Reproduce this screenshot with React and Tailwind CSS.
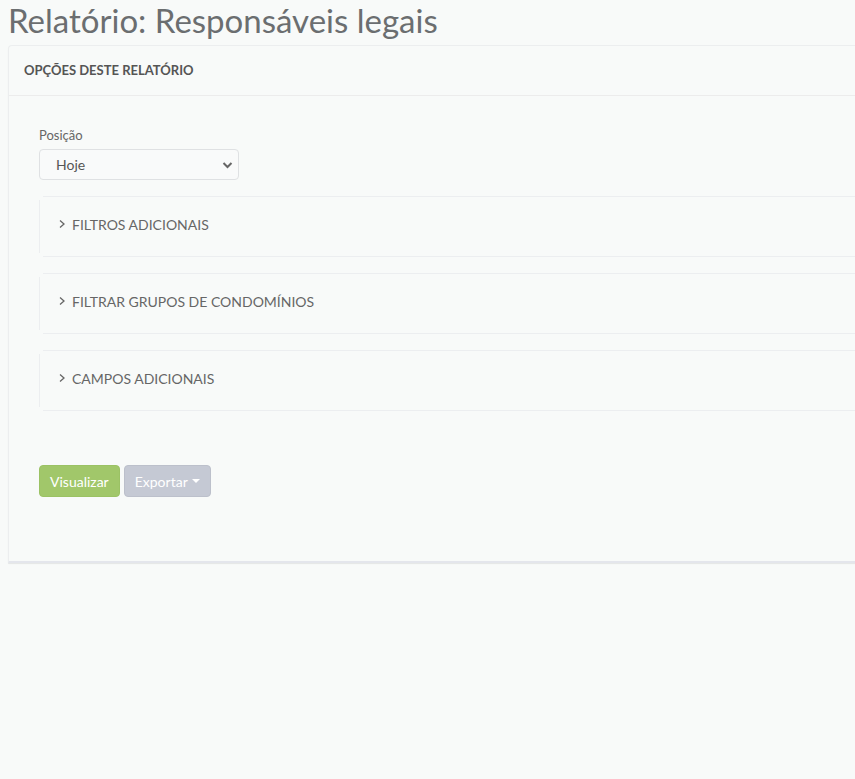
import React from 'react'

const Chevron = () => (
    <svg width="8" height="10" viewBox="0 0 8 10" className="mr-[6px]" fill="none">
        <path d="M2 1.5 L6 5 L2 8.5" stroke="#666" strokeWidth="1.3" />
    </svg>
)

const Collapsible = ({ title }) => (
    <div className="relative h-[61px] flex items-center pl-[19px] pb-[5px] text-[14px] text-[#666] uppercase">
        <div className="absolute left-[4px] right-0 top-0 h-px bg-[#eceef0]" />
        <div className="absolute left-[4px] right-0 bottom-0 h-px bg-[#eceef0]" />
        <div className="absolute left-0 top-[4px] bottom-[4px] w-px bg-[#eceef0]" />
        <Chevron />
        <span>{title}</span>
    </div>
)

export default function App() {
    return (
        <div className="w-[855px] h-[779px] overflow-hidden bg-[#f8faf9]" style={{ fontFamily: 'Lato, "Open Sans", sans-serif' }}>
            <h1 className="pl-[8px] pt-[1px] text-[33px] leading-[38px] text-[#6b6e70]">Relatório: Responsáveis legais</h1>
            <div className="ml-[8px] mt-[6px] w-[900px] bg-[#f8faf9] border-l border-t border-[#eceeef] rounded-tl-[4px] shadow-[0_1px_1px_rgba(0,0,0,0.08)] border-b-2 border-b-[#e4e6ec]">
                <div className="h-[50px] flex items-center px-[15px] border-b border-[#ececec]">
                    <span className="text-[13px] font-bold text-[#555] uppercase">Opções deste relatório</span>
                </div>
                <div className="pl-[30px] pr-0 pt-[30px] pb-[64px]">
                    <div className="text-[13px] text-[#666] leading-[18px]">Posição</div>
                    <div className="mt-[5px] w-[200px] h-[31px] border border-[#dfe1e3] rounded-[4px] flex items-center justify-between pl-[16px] pr-[5px] bg-[#f9fafa]">
                        <span className="text-[14px] text-[#555]">Hoje</span>
                        <svg width="11" height="8" viewBox="0 0 11 8" fill="none">
                            <path d="M1.5 2 L5.5 6 L9.5 2" stroke="#666" strokeWidth="2" />
                        </svg>
                    </div>
                    <div className="mt-[16px] flex flex-col gap-[16px]">
                        <Collapsible title="Filtros adicionais" />
                        <Collapsible title="Filtrar grupos de condomínios" />
                        <Collapsible title="Campos adicionais" />
                    </div>
                    <div className="mt-[54px] flex gap-[4px]">
                        <button className="h-[32px] px-[10px] rounded-[4px] bg-[#a1c76a] border border-[#9bc264] text-white text-[14px]">Visualizar</button>
                        <button className="h-[32px] px-[10px] rounded-[4px] bg-[#c5c9d4] border border-[#bcc0cb] text-white text-[14px] flex items-center gap-[4px]">
                            Exportar
                            <svg width="8" height="5" viewBox="0 0 8 5"><path d="M0 0 L8 0 L4 4 Z" fill="#fff" /></svg>
                        </button>
                    </div>
                </div>
            </div>
        </div>
    )
}
